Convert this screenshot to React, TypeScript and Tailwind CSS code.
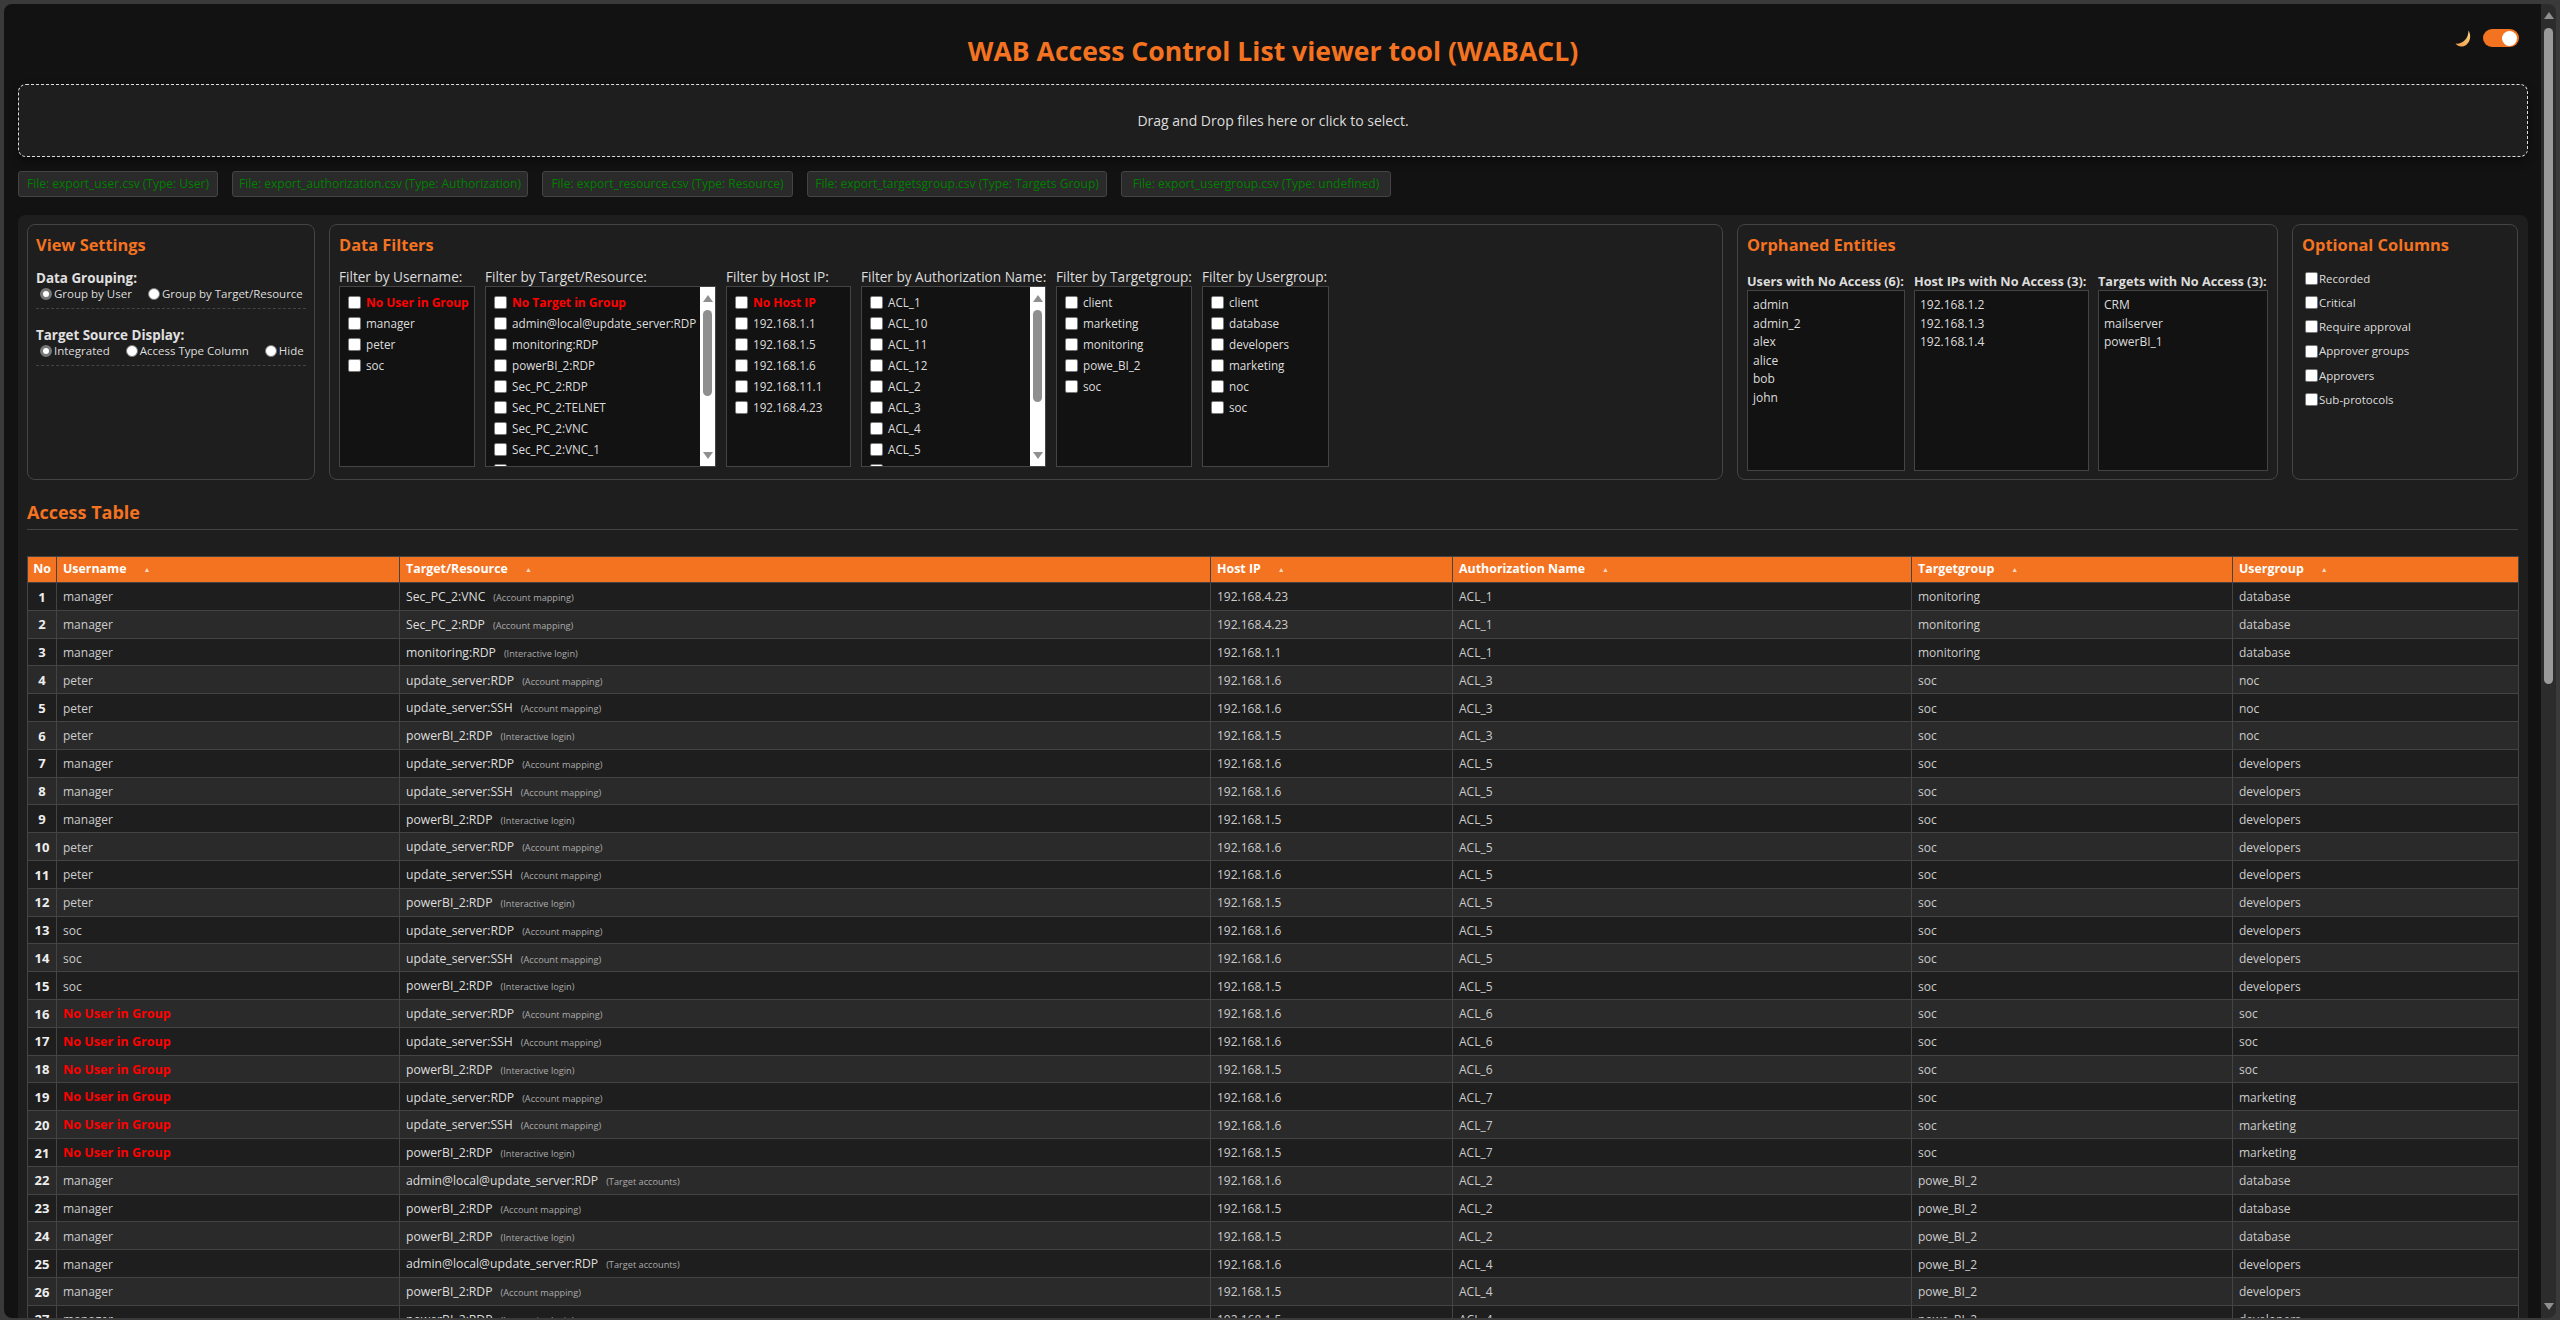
import React from 'react';

const font = 'font-["Open_Sans",sans-serif]';

type Row = { user: string; target: string; kind: string; ip: string; acl: string; tg: string; ug: string };

const ACCOUNT = 'Account mapping';
const LOGIN = 'Interactive login';
const TARGETS = 'Target accounts';

const trio = (user: string, acl: string, ug: string): Row[] => [
  { user, target: 'update_server:RDP', kind: ACCOUNT, ip: '192.168.1.6', acl, tg: 'soc', ug },
  { user, target: 'update_server:SSH', kind: ACCOUNT, ip: '192.168.1.6', acl, tg: 'soc', ug },
  { user, target: 'powerBI_2:RDP', kind: LOGIN, ip: '192.168.1.5', acl, tg: 'soc', ug },
];

const biTrio = (acl: string, ug: string): Row[] => [
  { user: 'manager', target: 'admin@local@update_server:RDP', kind: TARGETS, ip: '192.168.1.6', acl, tg: 'powe_BI_2', ug },
  { user: 'manager', target: 'powerBI_2:RDP', kind: ACCOUNT, ip: '192.168.1.5', acl, tg: 'powe_BI_2', ug },
  { user: 'manager', target: 'powerBI_2:RDP', kind: LOGIN, ip: '192.168.1.5', acl, tg: 'powe_BI_2', ug },
];

const NO_USER = 'No User in Group';

const rows: Row[] = [
  { user: 'manager', target: 'Sec_PC_2:VNC', kind: ACCOUNT, ip: '192.168.4.23', acl: 'ACL_1', tg: 'monitoring', ug: 'database' },
  { user: 'manager', target: 'Sec_PC_2:RDP', kind: ACCOUNT, ip: '192.168.4.23', acl: 'ACL_1', tg: 'monitoring', ug: 'database' },
  { user: 'manager', target: 'monitoring:RDP', kind: LOGIN, ip: '192.168.1.1', acl: 'ACL_1', tg: 'monitoring', ug: 'database' },
  ...trio('peter', 'ACL_3', 'noc'),
  ...trio('manager', 'ACL_5', 'developers'),
  ...trio('peter', 'ACL_5', 'developers'),
  ...trio('soc', 'ACL_5', 'developers'),
  ...trio(NO_USER, 'ACL_6', 'soc'),
  ...trio(NO_USER, 'ACL_7', 'marketing'),
  ...biTrio('ACL_2', 'database'),
  ...biTrio('ACL_4', 'developers'),
];

const FileChip = ({ label, width }: { label: string; width: string }) => (
  <div className={`h-[26px] ${width} flex items-center justify-center bg-[#2a2a2a] border border-[#444] rounded-[3px] text-[12px] text-[#008000] whitespace-nowrap`}>
    {label}
  </div>
);

const CardTitle = ({ children }: { children: React.ReactNode }) => (
  <h3 className="text-[16.4px] leading-[20px] font-bold text-[#f47321]">{children}</h3>
);

const Radio = ({ label, checked }: { label: string; checked?: boolean }) => (
  <label className="flex items-center gap-[2px] whitespace-nowrap">
    <span className={`w-[12px] h-[12px] rounded-full border bg-white ${checked ? 'border-[3px] border-[#777]' : 'border-[#777]'}`} />
    {label}
  </label>
);

const Check = () => <span className="w-[13px] h-[13px] shrink-0 bg-white border border-[#777] rounded-[2px]" />;

const ScrollArrow = ({ up }: { up?: boolean }) => (
  <svg width="10" height="7" viewBox="0 0 10 7" className="shrink-0">
    <path d={up ? 'M5 0 L10 7 L0 7 Z' : 'M5 7 L10 0 L0 0 Z'} fill="#8f8f8f" />
  </svg>
);

const ListScrollbar = ({ thumb }: { thumb: string }) => (
  <div className="w-[15px] shrink-0 bg-white flex flex-col items-center pt-[8px] pb-[7px]">
    <ScrollArrow up />
    <div className={`w-[9px] mt-[8px] rounded-full bg-[#8f8f8f] ${thumb}`} />
    <div className="flex-1" />
    <ScrollArrow />
  </div>
);

const FilterBox = ({
  title,
  items,
  red,
  width,
  thumb,
}: {
  title: string;
  items: string[];
  red?: string;
  width: string;
  thumb?: string;
}) => (
  <div className={`flex flex-col ${width}`}>
    <div className="h-[18px] leading-[18px] text-[13.6px] text-[#dddddd] whitespace-nowrap">{title}</div>
    <div className="h-[181px] flex bg-[#121212] border border-[#444] overflow-hidden">
      <div className="flex-1 min-w-0 pt-[5px] pl-[8px]">
        {red && (
          <div className="h-[21px] flex items-center gap-[5px] text-[12px] font-bold text-[#ff0000] whitespace-nowrap">
            <Check />
            {red}
          </div>
        )}
        {items.map((item) => (
          <div key={item} className="h-[21px] flex items-center gap-[5px] text-[11.7px] text-[#dddddd] whitespace-nowrap">
            <Check />
            {item}
          </div>
        ))}
      </div>
      {thumb && <ListScrollbar thumb={thumb} />}
    </div>
  </div>
);

const OrphanBox = ({ title, items, width }: { title: string; items: string[]; width: string }) => (
  <div className={`flex flex-col ${width}`}>
    <div className="h-[18px] leading-[18px] text-[12.7px] font-bold text-[#dddddd] whitespace-nowrap">{title}</div>
    <div className="h-[181px] bg-[#121212] border border-[#444] pt-[5px] px-[5px]">
      {items.map((item) => (
        <div key={item} className="h-[18.6px] leading-[18.6px] text-[12px] text-[#dddddd]">
          {item}
        </div>
      ))}
    </div>
  </div>
);

const columns = ['Username', 'Target/Resource', 'Host IP', 'Authorization Name', 'Targetgroup', 'Usergroup'];
const colWidths = ['w-[29px]', 'w-[343px]', 'w-[811px]', 'w-[242px]', 'w-[459px]', 'w-[321px]', 'w-[286px]'];
const cell = 'border border-[#444] px-[6px] text-left';
const bodyCell = 'border border-[#444] px-[6px] pt-[2px] text-left';

export default function App() {
  return (
    <div className={`${font} w-[2560px] h-[1320px] overflow-hidden bg-[#3a3a3a] pt-[4px] pl-[4px] pr-[4px] pb-[2px] text-[12px]`}>
      <div className="h-full flex rounded-[8px] overflow-hidden">
        <div className="flex-1 min-w-0 h-full overflow-hidden bg-[#121212] pl-[14px] pr-[13px]">
          {/* header */}
          <div className="relative h-[80px] flex items-center justify-center pt-[16px]">
            <h1 className="text-[26.6px] font-bold text-[#f47321]">WAB Access Control List viewer tool (WABACL)</h1>
            <div className="absolute right-[9px] top-[25px] flex items-center gap-[11px]">
              <svg width="17" height="17" viewBox="0 0 17 17">
                <defs>
                  <linearGradient id="moon" x1="0.8" y1="0" x2="0.2" y2="1">
                    <stop offset="0" stopColor="#f8d27e" />
                    <stop offset="1" stopColor="#f4a04a" />
                  </linearGradient>
                </defs>
                <path d="M13.5 0.5 C17.5 7 14 15.5 7 16.5 C4.5 16.8 2.2 15.6 0.5 13.5 C6 14.5 13.5 10 13.5 0.5 Z" fill="url(#moon)" />
              </svg>
              <div className="w-[36px] h-[18px] rounded-full bg-[#f47321] flex items-center justify-end pr-[2px]">
                <span className="w-[15px] h-[15px] rounded-full bg-white" />
              </div>
            </div>
          </div>

          {/* drop zone */}
          <div className="h-[73px] bg-[#1e1e1e] border border-dashed border-[#dddddd] rounded-[8px] shadow-[0_4px_8px_rgba(0,0,0,0.4)] flex items-center justify-center text-[14px] text-[#dddddd]">
            Drag and Drop files here or click to select.
          </div>

          {/* loaded files */}
          <div className="mt-[14px] flex gap-[14px]">
            <FileChip width="w-[200px]" label="File: export_user.csv (Type: User)" />
            <FileChip width="w-[296px]" label="File: export_authorization.csv (Type: Authorization)" />
            <FileChip width="w-[251px]" label="File: export_resource.csv (Type: Resource)" />
            <FileChip width="w-[300px]" label="File: export_targetsgroup.csv (Type: Targets Group)" />
            <FileChip width="w-[270px]" label="File: export_usergroup.csv (Type: undefined)" />
          </div>

          {/* main panel */}
          <div className="mt-[18px] bg-[#1e1e1e] rounded-t-[8px] pl-[9px] pr-[10px] pt-[9px]">
            <div className="flex gap-[14px] h-[256px]">
              <section className="w-[288px] shrink-0 border border-[#444] rounded-[8px] px-[8px] pt-[10px]">
                <CardTitle>View Settings</CardTitle>
                <div className="mt-[14px] text-[13.4px] leading-[18px] font-bold text-[#e0e0e0]">Data Grouping:</div>
                <div className="mt-[-1px] pl-[4px] flex gap-[16px] h-[16px] items-center text-[11.5px] text-[#dddddd]">
                  <Radio label="Group by User" checked />
                  <Radio label="Group by Target/Resource" />
                </div>
                <div className="mt-[6px] border-b border-dashed border-[#444]" />
                <div className="mt-[17px] text-[13.4px] leading-[18px] font-bold text-[#e0e0e0]">Target Source Display:</div>
                <div className="mt-[-1px] pl-[4px] flex gap-[16px] h-[16px] items-center text-[11.5px] text-[#dddddd]">
                  <Radio label="Integrated" checked />
                  <Radio label="Access Type Column" />
                  <Radio label="Hide" />
                </div>
                <div className="mt-[6px] border-b border-dashed border-[#444]" />
              </section>

              <section className="flex-1 min-w-0 border border-[#444] rounded-[8px] px-[9px] pt-[10px]">
                <CardTitle>Data Filters</CardTitle>
                <div className="mt-[13px] flex gap-[10px]">
                  <FilterBox title="Filter by Username:" width="w-[136px]" red={NO_USER} items={['manager', 'peter', 'soc']} />
                  <FilterBox
                    title="Filter by Target/Resource:"
                    width="w-[231px]"
                    red="No Target in Group"
                    thumb="h-[86px]"
                    items={['admin@local@update_server:RDP', 'monitoring:RDP', 'powerBI_2:RDP', 'Sec_PC_2:RDP', 'Sec_PC_2:TELNET', 'Sec_PC_2:VNC', 'Sec_PC_2:VNC_1', 'Sec_SQ:RDP']}
                  />
                  <FilterBox title="Filter by Host IP:" width="w-[125px]" red="No Host IP" items={['192.168.1.1', '192.168.1.5', '192.168.1.6', '192.168.11.1', '192.168.4.23']} />
                  <FilterBox
                    title="Filter by Authorization Name:"
                    width="w-[185px]"
                    thumb="h-[92px]"
                    items={['ACL_1', 'ACL_10', 'ACL_11', 'ACL_12', 'ACL_2', 'ACL_3', 'ACL_4', 'ACL_5', 'ACL_6']}
                  />
                  <FilterBox title="Filter by Targetgroup:" width="w-[136px]" items={['client', 'marketing', 'monitoring', 'powe_BI_2', 'soc']} />
                  <FilterBox title="Filter by Usergroup:" width="w-[127px]" items={['client', 'database', 'developers', 'marketing', 'noc', 'soc']} />
                </div>
              </section>

              <section className="w-[541px] shrink-0 border border-[#444] rounded-[8px] px-[9px] pt-[10px]">
                <CardTitle>Orphaned Entities</CardTitle>
                <div className="mt-[17px] flex gap-[9px]">
                  <OrphanBox title="Users with No Access (6):" width="w-[158px]" items={['admin', 'admin_2', 'alex', 'alice', 'bob', 'john']} />
                  <OrphanBox title="Host IPs with No Access (3):" width="w-[175px]" items={['192.168.1.2', '192.168.1.3', '192.168.1.4']} />
                  <OrphanBox title="Targets with No Access (3):" width="w-[170px]" items={['CRM', 'mailserver', 'powerBI_1']} />
                </div>
              </section>

              <section className="w-[226px] shrink-0 border border-[#444] rounded-[8px] px-[9px] pt-[10px]">
                <CardTitle>Optional Columns</CardTitle>
                <div className="mt-[11px] pl-[3px] flex flex-col">
                  {['Recorded', 'Critical', 'Require approval', 'Approver groups', 'Approvers', 'Sub-protocols'].map((c) => (
                    <div key={c} className="h-[24.3px] flex items-center gap-[1px] text-[11.5px] text-[#dddddd]">
                      <Check />
                      {c}
                    </div>
                  ))}
                </div>
              </section>
            </div>

            {/* access table */}
            <h2 className="mt-[18px] text-[18px] leading-[28px] font-bold text-[#f47321]">Access Table</h2>
            <div className="mt-[3px] border-b border-[#444]" />
            <table className="mt-[26px] w-full border-collapse table-fixed text-[12px]">
              <colgroup>
                {colWidths.map((w) => (
                  <col key={w} className={w} />
                ))}
              </colgroup>
              <thead>
                <tr className="h-[26px] bg-[#f47321] text-white text-[12.4px]">
                  <th className="border border-[#444] text-center font-bold">No</th>
                  {columns.map((c) => (
                    <th key={c} className={`${cell} font-bold whitespace-nowrap`}>
                      {c}
                      <span className="ml-[17px] text-[7px] align-middle text-[#f8d8c0]">▲</span>
                    </th>
                  ))}
                </tr>
              </thead>
              <tbody>
                {rows.map((r, i) => (
                  <tr key={i} className={`h-[27.8px] ${i % 2 === 0 ? 'bg-[#1e1e1e]' : 'bg-[#2a2a2a]'} text-[#cccccc]`}>
                    <td className="border border-[#444] pt-[2px] text-center font-bold text-[#eeeeee] text-[13px]">{i + 1}</td>
                    <td className={`${bodyCell} ${r.user === NO_USER ? 'font-bold text-[12.6px] text-[#ff0000]' : ''}`}>{r.user}</td>
                    <td className={bodyCell}>
                      <span className="text-[#dddddd] text-[12.2px]">{r.target}</span>
                      <span className="ml-[8px] text-[9.2px] text-[#aaaaaa]">({r.kind})</span>
                    </td>
                    <td className={bodyCell}>{r.ip}</td>
                    <td className={bodyCell}>{r.acl}</td>
                    <td className={bodyCell}>{r.tg}</td>
                    <td className={bodyCell}>{r.ug}</td>
                  </tr>
                ))}
              </tbody>
            </table>
          </div>
        </div>

        {/* page scrollbar */}
        <div className="w-[15px] h-full shrink-0 bg-[#2c2c2c] flex flex-col items-center pt-[8px] pb-[8px]">
          <ScrollArrow up />
          <div className="w-[9px] h-[656px] mt-[9px] rounded-full bg-[#9a9a9a]" />
          <div className="flex-1" />
          <ScrollArrow />
        </div>
      </div>
    </div>
  );
}
